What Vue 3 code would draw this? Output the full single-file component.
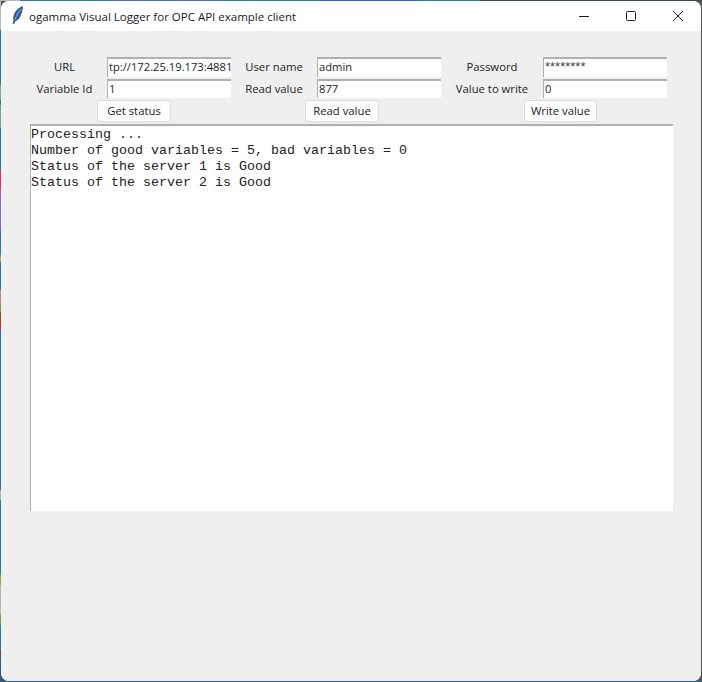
<script setup>
const rows = [
  [
    { label: 'URL', value: 'tp://172.25.19.173:4881' },
    { label: 'User name', value: 'admin' },
    { label: 'Password', value: '********', secret: true },
  ],
  [
    { label: 'Variable Id', value: '1' },
    { label: 'Read value', value: '877' },
    { label: 'Value to write', value: '0' },
  ],
]
const fields = rows.flat()
const log = `Processing ...
Number of good variables = 5, bad variables = 0
Status of the server 1 is Good
Status of the server 2 is Good`
</script>

<template>
  <div class="desktop">
    <div class="window">
      <header class="titlebar">
        <svg class="feather" width="16" height="18" viewBox="0 0 16 18">
          <path d="M12.500 0.500 C8.500 2 5 5.500 4 9.500 C3.500 11.500 3.500 13.500 4 14.500 L3 17.500 L4 17.500 L5 15 C7.500 14.500 9.500 12 10.500 9 C11.500 6.500 12.500 3.500 12.500 0.500 Z" fill="#2f5f9f" stroke="#1d2f4a" stroke-width="0.6" />
          <path d="M11.500 3 C8.500 6 6.500 9 5 13.500" stroke="#9fc0e6" stroke-width="0.9" fill="none" />
        </svg>
        <span class="title">ogamma Visual Logger for OPC API example client</span>
        <div class="controls">
          <svg width="12" height="12" viewBox="0 0 12 12"><path d="M1 6.500 H11" stroke="#222" stroke-width="1" fill="none" /></svg>
          <svg width="12" height="12" viewBox="0 0 12 12"><rect x="1.500" y="1.500" width="9" height="9" rx="1" stroke="#222" stroke-width="1" fill="none" /></svg>
          <svg width="12" height="12" viewBox="0 0 12 12"><path d="M1 1 L11 11 M11 1 L1 11" stroke="#222" stroke-width="1" fill="none" /></svg>
        </div>
      </header>
      <main class="content">
        <div class="form">
          <template v-for="f in fields" :key="f.label">
            <label class="label">{{ f.label }}</label>
            <div class="entry" :class="{ secret: f.secret }">{{ f.value }}</div>
          </template>
        </div>
        <div class="buttons">
          <button class="btn b1">Get status</button>
          <button class="btn b2">Read value</button>
          <button class="btn b3">Write value</button>
        </div>
        <pre class="log">{{ log }}</pre>
      </main>
    </div>
  </div>
</template>

<style>
html, body { margin: 0; padding: 0; overflow: hidden; }
</style>

<style scoped>
.desktop {
  width: 702px;
  height: 682px;
  box-sizing: border-box;
  padding: 1px 1px 1px 1px;
  background:
    linear-gradient(180deg,
      #b8b8b8 0 30px, #2f7c95 30px 85px, #7ab08a 85px 100px, #2f7c95 100px 105px,
      #6fa57f 105px 128px, #2f7c95 128px 170px, #d0357a 170px 190px, #a060c0 190px 200px,
      #7a70d0 200px 230px, #2f7c95 230px 255px, #b09a70 255px 262px, #2f7c95 262px 290px,
      #c08a80 290px 305px, #6f9a60 305px 312px, #a83a3a 312px 330px, #2f7c95 330px 490px,
      #b0b0b0 490px 500px, #2f7c95 500px 575px, #8ab040 575px 585px, #b0b8a8 585px 615px,
      #70a040 615px 625px, #2f7c95 625px 650px, #555 650px 660px, #1f5f8c 660px 682px
    ) left / 1px 100% no-repeat,
    linear-gradient(90deg,
      #b8b8b8 0 20px, #2f7c95 20px 100px, #3f70c0 100px 220px, #2f7c95 220px 320px,
      #3060d0 320px 420px, #2f7c95 420px 480px, #3d4a55 480px 702px
    ) top / 100% 1px no-repeat,
    linear-gradient(#1f5f8c, #1f5f8c) bottom / 100% 1px no-repeat,
    #555;
  overflow: hidden;
}
.window {
  width: 700px;
  height: 680px;
  border-radius: 8px;
  overflow: hidden;
  display: flex;
  flex-direction: column;
  background: #f0f0f0;
  font-family: "Open Sans", "Noto Sans", sans-serif;
}
.titlebar {
  height: 30px;
  flex: none;
  background: #fff;
  display: flex;
  align-items: center;
  padding-left: 9px;
  box-sizing: border-box;
}
.feather { flex: none; margin-top: -2px; }
.title {
  margin-left: 3px;
  font-size: 11.5px;
  color: #1a1a1a;
  white-space: nowrap;
}
.controls {
  margin-left: auto;
  display: flex;
  gap: 35px;
  padding-right: 17px;
}
.content {
  flex: 1;
  background: #efefef;
}
.form {
  display: grid;
  grid-template-columns: 85px 124px 86px 124px 102px 124px;
  grid-template-rows: 20px 19px;
  row-gap: 2px;
  padding: 26px 0 0 21px;
}
.label {
  text-align: center;
  font-size: 11.3px;
  line-height: 19px;
  color: #1c1c1c;
  white-space: nowrap;
}
.entry {
  box-sizing: border-box;
  background: #fff;
  border-top: 2px solid #b0b0b0;
  border-left: 1px solid #b0b0b0;
  padding-left: 1px;
  font-size: 11.2px;
  line-height: 16px;
  color: #1c1c1c;
  white-space: nowrap;
  overflow: hidden;
}
.secret {
  font-family: "Liberation Sans", sans-serif;
  font-size: 13px;
  line-height: 15px;
  color: #444;
}
.buttons {
  display: flex;
  margin-top: 2px;
  height: 22px;
}
.btn {
  box-sizing: border-box;
  height: 22px;
  width: 74px;
  padding: 0;
  background: #fdfdfd;
  border: 1px solid #dcdcdc;
  border-radius: 3px;
  font-family: inherit;
  font-size: 11.3px;
  line-height: 20px;
  color: #1c1c1c;
}
.b1 { margin-left: 96px; }
.b2 { margin-left: 134px; }
.b3 { margin-left: 145px; width: 73px; }
.log {
  box-sizing: border-box;
  width: 643px;
  height: 387px;
  margin: 2px 0 0 29px;
  padding: 1px 0 0 0;
  background: #fff;
  border-top: 2px solid #b0b0b0;
  border-left: 1px solid #b0b0b0;
  font-family: "Liberation Mono", monospace;
  font-size: 13.33px;
  line-height: 16px;
  color: #222;
}
</style>
